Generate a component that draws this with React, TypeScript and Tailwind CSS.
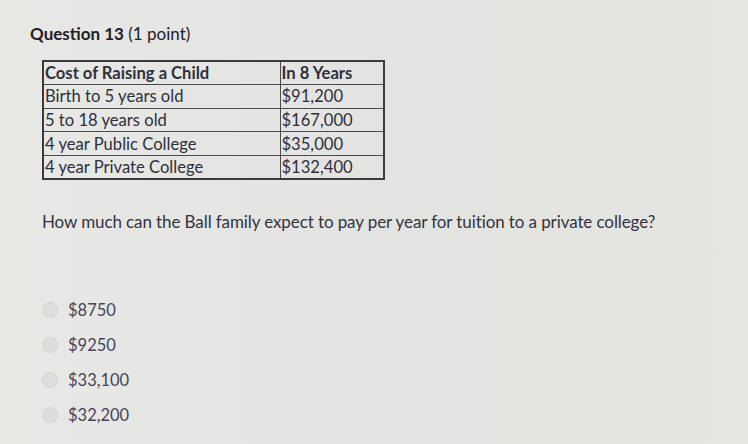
const rows: [string, string][] = [
  ["Cost of Raising a Child", "In 8 Years"],
  ["Birth to 5 years old", "$91,200"],
  ["5 to 18 years old", "$167,000"],
  ["4 year Public College", "$35,000"],
  ["4 year Private College", "$132,400"],
];

const options = ["$8750", "$9250", "$33,100", "$32,200"];

export default function App() {
  return (
    <div
      className="h-[444px] w-[748px] overflow-hidden bg-gradient-to-r from-[#e8e8e5] via-[#e3e4e2] to-[#e6e5e0] text-[#2b2c36]"
      style={{ fontFamily: "Lato, 'Liberation Sans', sans-serif" }}
    >
      <div className="pl-[30px] pt-[24px]">
        <h1 className="text-[17px] leading-5 text-[#1f2026]">
          <span className="font-bold">Question 13</span> (1 point)
        </h1>
      </div>

      <div className="pl-[42px] pt-[16px]">
        <table className="w-[343px] border-collapse border-2 border-[#3a3a3e] text-[16.6px] leading-[22px] text-[#2e2f3c]">
          <tbody>
            {rows.map(([label, value], i) => (
              <tr key={label} className="h-[23.6px]">
                <td
                  className={`w-[237px] border border-[#4a4a50] px-[1px] ${
                    i === 0 ? "font-bold" : ""
                  }`}
                >
                  {label}
                </td>
                <td
                  className={`border border-[#4a4a50] px-[1px] ${
                    i === 0 ? "font-bold" : ""
                  }`}
                >
                  {value}
                </td>
              </tr>
            ))}
          </tbody>
        </table>

        <p className="pt-[32px] text-[17px] leading-5 tracking-[-0.1px] text-[#33343e]">
          How much can the Ball family expect to pay per year for tuition to a
          private college?
        </p>

        <div className="flex flex-col gap-[15px] pt-[68px]">
          {options.map((o) => (
            <label key={o} className="flex h-5 items-center gap-[10px]">
              <span className="h-[16px] w-[16px] rounded-full border border-[#d4d4d6] bg-[#dcdde0]" />
              <span className="text-[16.5px] text-[#46445a]">{o}</span>
            </label>
          ))}
        </div>
      </div>
    </div>
  );
}
